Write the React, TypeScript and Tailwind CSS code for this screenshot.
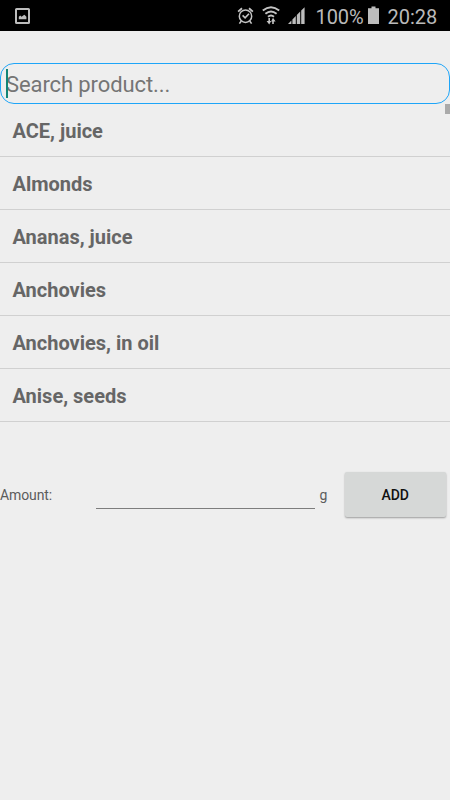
import React, { useState } from 'react';

const PRODUCTS = [
  'ACE, juice',
  'Almonds',
  'Ananas, juice',
  'Anchovies',
  'Anchovies, in oil',
  'Anise, seeds',
];

function PictureIcon() {
  return (
    <svg width="15" height="16" viewBox="0 0 15 16" aria-hidden="true">
      <rect x="1" y="1" width="13" height="14" rx="0.6" fill="none" stroke="#bdbdbd" strokeWidth="2" />
      <path d="M3.8 11.3V8.8L5.2 7.6L6.6 8.8L8.2 7.6L9.4 6.8L11.4 8.8V11.3Z" fill="#bdbdbd" />
    </svg>
  );
}

function AlarmIcon() {
  return (
    <svg width="17" height="18" viewBox="0 0 17 18" fill="none" stroke="#c4c4c4" aria-hidden="true">
      <circle cx="8.5" cy="9.2" r="6.2" strokeWidth="1.5" />
      <path d="M1.1 4.6L5 1.2M15.9 4.6L12 1.2" strokeWidth="1.8" />
      <path d="M5.6 8.4L8.1 10.9L12 6.8" strokeWidth="1.6" />
      <path d="M4.3 14L2.4 16.6M12.7 14L14.6 16.6" strokeWidth="1.6" />
    </svg>
  );
}

function WifiIcon() {
  return (
    <svg width="18" height="20" viewBox="0 0 18 20" fill="none" stroke="#c4c4c4" aria-hidden="true">
      <path d="M0.8 4.6Q9 -2.2 17.2 4.6" strokeWidth="1.9" />
      <path d="M3.4 7.8Q9 3.2 14.6 7.8" strokeWidth="1.9" />
      <path d="M6 10.7Q9 8.2 12 10.7" strokeWidth="1.9" />
      <path d="M7.2 12V16.5M11 18V14" strokeWidth="1.6" />
      <path d="M4.6 15H9.2L7.2 18.6ZM9.1 15.4H13.6L11 11.8Z" fill="#c4c4c4" stroke="none" />
    </svg>
  );
}

function SignalIcon() {
  return (
    <svg width="17" height="17" viewBox="0 0 17 17" fill="#bdbdbd" aria-hidden="true">
      <path d="M0 17L3.4 13.5V17ZM4.4 12.5L7.8 9V17H4.4ZM8.8 8L12.2 4.6V17H8.8ZM13.2 3.6L16.6 0.2V17H13.2Z" />
    </svg>
  );
}

function BatteryIcon() {
  return (
    <svg width="11" height="18" viewBox="0 0 11 18" fill="#bdbdbd" aria-hidden="true">
      <path d="M3.5 0.5H7.5V2.2H11V18H0V2.2H3.5Z" />
    </svg>
  );
}

function StatusBar() {
  return (
    <header className="flex h-[31px] items-start bg-black text-[20px] leading-[34px] text-[#bababa]">
      <div className="ml-[15px] mt-2">
        <PictureIcon />
      </div>
      <div className="ml-auto mt-[7px]">
        <AlarmIcon />
      </div>
      <div className="ml-[8px] mt-[6px]">
        <WifiIcon />
      </div>
      <div className="ml-[8px] mt-[7px]">
        <SignalIcon />
      </div>
      <span className="ml-[10.5px] w-[48.5px] whitespace-nowrap tracking-[-0.1px]">100%</span>
      <div className="ml-[4px] mt-[6px]">
        <BatteryIcon />
      </div>
      <span className="ml-[8.5px] mr-[13px] w-[49.5px] whitespace-nowrap">20:28</span>
    </header>
  );
}

export default function App() {
  const [query, setQuery] = useState('');
  const [amount, setAmount] = useState('');

  return (
    <div className="flex h-[800px] w-[450px] flex-col overflow-hidden bg-[#eeeeee] font-['Roboto',sans-serif]">
      <StatusBar />

      {/* Search field */}
      <div className="relative mt-[31.5px] h-[41.5px] shrink-0">
        <input
          type="text"
          value={query}
          onChange={(e) => setQuery(e.target.value)}
          placeholder="Search product..."
          className="block h-full w-full rounded-[14px] border border-[#1ea5f8] bg-transparent pl-[5px] pt-[2px] text-[22px] tracking-[-0.1px] text-[#444444] caret-[#00897b] outline-none placeholder:text-[#757575]"
        />
        {!query && <span className="absolute left-[6px] top-[6.5px] h-[29px] w-[2px] bg-[#128577]" />}
      </div>

      {/* Product list */}
      <div className="relative shrink-0">
        <ul>
          {PRODUCTS.map((product) => (
            <li
              key={product}
              className="flex h-[53px] items-center border-b border-[#d0d0d0] pl-[12.5px] pt-[2px] text-[20px] font-bold text-[#666666]"
            >
              {product}
            </li>
          ))}
        </ul>
        <span className="absolute right-0 top-0 h-[10px] w-[5px] bg-[#aaaaaa]" />
      </div>

      {/* Amount row */}
      <div className="mt-[50px] flex h-[46px] shrink-0 items-center text-[14px] text-[#5c5c5c]">
        <label htmlFor="amount" className="w-[96px] tracking-[-0.1px]">
          Amount:
        </label>
        <input
          id="amount"
          type="text"
          value={amount}
          onChange={(e) => setAmount(e.target.value)}
          className="mt-[2px] h-[25px] w-[218.5px] border-b border-[#7d7d7d] bg-transparent outline-none"
        />
        <span className="ml-[5px] w-[25.5px]">g</span>
        <button
          type="button"
          className="mb-[1px] h-[45px] w-[100.5px] rounded-[2px] bg-[#d6d8d7] pt-[1px] text-[14px] font-medium tracking-[-0.1px] text-[#111111] shadow-[0_1px_2px_rgba(0,0,0,0.35)]"
        >
          ADD
        </button>
      </div>
    </div>
  );
}
